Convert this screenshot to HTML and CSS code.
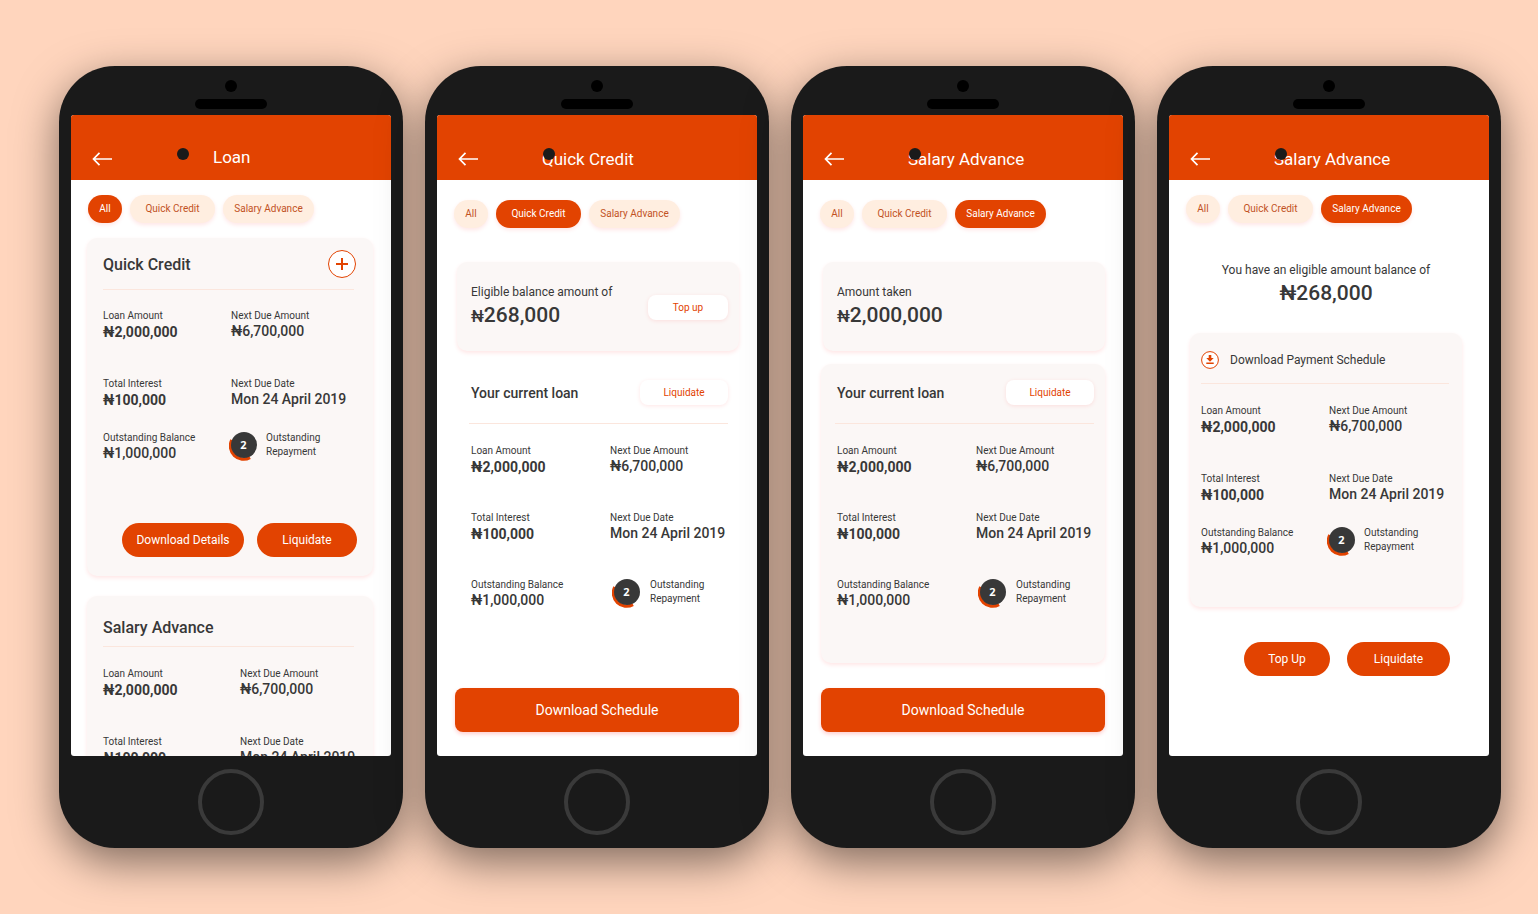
FILE: index.html
```
<!DOCTYPE html>
<html lang="en">
<head>
    <meta charset="UTF-8">
    <meta name="viewport" content="width=device-width, initial-scale=1.0">
    <title>Loan screens</title>
    <link rel="stylesheet" href="styles.css">
</head>
<body>
<svg class="sprite" aria-hidden="true">
    <symbol id="arrow" viewBox="0 0 20 16">
        <path d="M1.500 8H20M7.500 1.800L1.500 8l6 6.200" fill="none" stroke="#fff" stroke-width="1.700"/>
    </symbol>
    <symbol id="ring" viewBox="0 0 30 30">
        <path d="M2.800 9A13.200 13.200 0 0 0 21 26.500" fill="none" stroke="#e24301" stroke-width="3.200"/>
        <circle cx="15" cy="14" r="13" fill="#383838"/>
    </symbol>
</svg>

<main class="phones">
    <section class="phone">
        <div class="camera"></div>
        <div class="speaker"></div>
        <div class="screen">
            <header class="bar bar-center">
                <button class="back" aria-label="Back"><svg width="20" height="16"><use href="#arrow"/></svg></button>
                <h1>Loan</h1>
            </header>
            <span class="dot"></span>
            <nav class="tabs">
                <button class="tab tab-all active">All</button>
                <button class="tab">Quick Credit</button>
                <button class="tab tab-wide">Salary Advance</button>
            </nav>
            <div class="content list">
                <article class="card loan">
                    <div class="card-head">
                        <h2>Quick Credit</h2>
                        <button class="add" aria-label="Add">
                            <svg width="28" height="28" viewBox="0 0 28 28">
                                <circle cx="14" cy="14" r="13.5" fill="#fff" stroke="#e24301"/>
                                <path d="M14 8v12M8 14h12" stroke="#e24301" stroke-width="2"/>
                            </svg>
                        </button>
                    </div>
                    <div class="row">
                        <div><p>Loan Amount</p><b>₦2,000,000</b></div>
                        <div><p>Next Due Amount</p><strong>₦6,700,000</strong></div>
                    </div>
                    <div class="row tight">
                        <div><p>Total Interest</p><b>₦100,000</b></div>
                        <div><p>Next Due Date</p><strong>Mon 24 April 2019</strong></div>
                    </div>
                    <div class="row">
                        <div><p>Outstanding Balance</p><strong>₦1,000,000</strong></div>
                        <div class="repay">
                            <span class="badge"><svg width="30" height="30"><use href="#ring"/></svg><em>2</em></span>
                            <p>Outstanding<br>Repayment</p>
                        </div>
                    </div>
                    <div class="actions">
                        <button class="btn btn-details">Download Details</button>
                        <button class="btn">Liquidate</button>
                    </div>
                </article>
                <article class="card loan loan-wide">
                    <div class="card-head">
                        <h2>Salary Advance</h2>
                    </div>
                    <div class="row">
                        <div><p>Loan Amount</p><b>₦2,000,000</b></div>
                        <div><p>Next Due Amount</p><strong>₦6,700,000</strong></div>
                    </div>
                    <div class="row tight">
                        <div><p>Total Interest</p><b>₦100,000</b></div>
                        <div><p>Next Due Date</p><strong>Mon 24 April 2019</strong></div>
                    </div>
                </article>
            </div>
        </div>
        <button class="home" aria-label="Home"></button>
    </section>

    <section class="phone">
        <div class="camera"></div>
        <div class="speaker"></div>
        <div class="screen">
            <header class="bar">
                <button class="back" aria-label="Back"><svg width="20" height="16"><use href="#arrow"/></svg></button>
                <h1>Quick Credit</h1>
            </header>
            <span class="dot"></span>
            <nav class="tabs tabs-low">
                <button class="tab tab-all">All</button>
                <button class="tab active">Quick Credit</button>
                <button class="tab tab-wide">Salary Advance</button>
            </nav>
            <div class="content detail">
                <div class="card balance">
                    <div>
                        <p>Eligible balance amount of</p>
                        <div class="amount"><small>₦</small>268,000</div>
                    </div>
                    <button class="chip">Top up</button>
                </div>
                <article class="current">
                    <div class="current-head">
                        <h3>Your current loan</h3>
                        <button class="chip chip-wide">Liquidate</button>
                    </div>
                    <div class="row">
                        <div><p>Loan Amount</p><b>₦2,000,000</b></div>
                        <div><p>Next Due Amount</p><strong>₦6,700,000</strong></div>
                    </div>
                    <div class="row">
                        <div><p>Total Interest</p><b>₦100,000</b></div>
                        <div><p>Next Due Date</p><strong>Mon 24 April 2019</strong></div>
                    </div>
                    <div class="row">
                        <div><p>Outstanding Balance</p><strong>₦1,000,000</strong></div>
                        <div class="repay">
                            <span class="badge"><svg width="30" height="30"><use href="#ring"/></svg><em>2</em></span>
                            <p>Outstanding<br>Repayment</p>
                        </div>
                    </div>
                </article>
                <button class="download">Download Schedule</button>
            </div>
        </div>
        <button class="home" aria-label="Home"></button>
    </section>

    <section class="phone">
        <div class="camera"></div>
        <div class="speaker"></div>
        <div class="screen">
            <header class="bar">
                <button class="back" aria-label="Back"><svg width="20" height="16"><use href="#arrow"/></svg></button>
                <h1>Salary Advance</h1>
            </header>
            <span class="dot"></span>
            <nav class="tabs tabs-low">
                <button class="tab tab-all">All</button>
                <button class="tab">Quick Credit</button>
                <button class="tab tab-wide active">Salary Advance</button>
            </nav>
            <div class="content detail">
                <div class="card balance">
                    <div>
                        <p>Amount taken</p>
                        <div class="amount"><small>₦</small>2,000,000</div>
                    </div>
                </div>
                <article class="current card">
                    <div class="current-head">
                        <h3>Your current loan</h3>
                        <button class="chip chip-wide">Liquidate</button>
                    </div>
                    <div class="row">
                        <div><p>Loan Amount</p><b>₦2,000,000</b></div>
                        <div><p>Next Due Amount</p><strong>₦6,700,000</strong></div>
                    </div>
                    <div class="row">
                        <div><p>Total Interest</p><b>₦100,000</b></div>
                        <div><p>Next Due Date</p><strong>Mon 24 April 2019</strong></div>
                    </div>
                    <div class="row">
                        <div><p>Outstanding Balance</p><strong>₦1,000,000</strong></div>
                        <div class="repay">
                            <span class="badge"><svg width="30" height="30"><use href="#ring"/></svg><em>2</em></span>
                            <p>Outstanding<br>Repayment</p>
                        </div>
                    </div>
                </article>
                <button class="download">Download Schedule</button>
            </div>
        </div>
        <button class="home" aria-label="Home"></button>
    </section>

    <section class="phone">
        <div class="camera"></div>
        <div class="speaker"></div>
        <div class="screen">
            <header class="bar">
                <button class="back" aria-label="Back"><svg width="20" height="16"><use href="#arrow"/></svg></button>
                <h1>Salary Advance</h1>
            </header>
            <span class="dot"></span>
            <nav class="tabs">
                <button class="tab tab-all">All</button>
                <button class="tab">Quick Credit</button>
                <button class="tab tab-wide active">Salary Advance</button>
            </nav>
            <div class="content schedule">
                <div class="eligible">
                    <p>You have an eligible amount balance of</p>
                    <div class="amount">₦268,000</div>
                </div>
                <article class="card loan">
                    <a class="get" href="#">
                        <svg width="18" height="18" viewBox="0 0 18 18">
                            <circle cx="9" cy="9" r="8.4" fill="#fff" stroke="#e24301"/>
                            <path d="M7.7 4h2.6v3h2.4L9 10.8 5.3 7h2.4zM5.300 11.600h7.400v1.300H5.300z" fill="#e24301"/>
                        </svg>
                        Download Payment Schedule
                    </a>
                    <div class="row">
                        <div><p>Loan Amount</p><b>₦2,000,000</b></div>
                        <div><p>Next Due Amount</p><strong>₦6,700,000</strong></div>
                    </div>
                    <div class="row tight">
                        <div><p>Total Interest</p><b>₦100,000</b></div>
                        <div><p>Next Due Date</p><strong>Mon 24 April 2019</strong></div>
                    </div>
                    <div class="row">
                        <div><p>Outstanding Balance</p><strong>₦1,000,000</strong></div>
                        <div class="repay">
                            <span class="badge"><svg width="30" height="30"><use href="#ring"/></svg><em>2</em></span>
                            <p>Outstanding<br>Repayment</p>
                        </div>
                    </div>
                </article>
                <div class="actions">
                    <button class="btn btn-top">Top Up</button>
                    <button class="btn btn-pay">Liquidate</button>
                </div>
            </div>
        </div>
        <button class="home" aria-label="Home"></button>
    </section>
</main>
</body>
</html>
```
FILE: styles.css
```
* {
    box-sizing: border-box;
}

body {
    margin: 0;
    background: #ffd5bd;
    color: #383838;
    font-family: Roboto, "Liberation Sans", sans-serif;
    font-size: 10px;
    line-height: 14px;
}

h1, h2, h3, p {
    margin: 0;
}

h2, h3 {
    font-weight: 500;
}

button {
    border: none;
    padding: 0;
    background: none;
    color: inherit;
    font-family: inherit;
    font-size: inherit;
    line-height: inherit;
    cursor: pointer;
}

svg {
    display: block;
}

.sprite {
    display: none;
}

.phones {
    display: flex;
    flex-wrap: wrap;
    justify-content: center;
    align-content: center;
    row-gap: 66px;
    min-height: 100vh;
    padding: 66px 0;
}

/* device */

.phone {
    flex: none;
    position: relative;
    display: flex;
    flex-direction: column;
    align-items: center;
    margin-left: 22px;
    padding: 14px 12px 13px;
    border-radius: 56px;
    background: #1a1a1a;
    box-shadow: 0 14px 44px rgba(0, 0, 0, .5);
}

.camera {
    width: 12px;
    height: 12px;
    border-radius: 50%;
    background: #000;
}

.speaker {
    width: 72px;
    height: 10px;
    margin: 7px 0 6px;
    border-radius: 5px;
    background: #000;
}

.screen {
    position: relative;
    width: 320px;
    height: 641px;
    border-radius: 3px;
    overflow: hidden;
    background: #fff;
}

.home {
    width: 66px;
    height: 66px;
    margin-top: 13px;
    border: 4px solid #3a3a3a;
    border-radius: 50%;
}

.dot {
    position: absolute;
    top: 33px;
    left: 106px;
    width: 12px;
    height: 12px;
    border-radius: 50%;
    background: #1a1a1a;
}

/* top bar and tabs */

.bar {
    display: flex;
    align-items: flex-end;
    gap: 64px;
    height: 65px;
    padding: 0 21px 10px;
    background: #e24301;
    color: #fff;
}

.back {
    padding-bottom: 3px;
}

.bar h1 {
    font-size: 17px;
    font-weight: 400;
    line-height: 22px;
}

.bar-center h1 {
    margin: 0 0 2px 37px;
}

.tabs {
    display: flex;
    gap: 8px;
    padding: 15px 17px 0;
}

.tabs-low {
    padding-top: 20px;
}

.tab {
    width: 85px;
    height: 28px;
    border-radius: 14px;
    background: #ffeee0;
    color: #c2521f;
    box-shadow: 0 2px 4px rgba(255, 0, 0, .1);
}

.tab-all {
    width: 34px;
}

.tab-wide {
    width: 91px;
}

.tab.active {
    background: #e24301;
    color: #fff;
}

/* cards */

.card {
    border-radius: 10px;
    background: #fbf7f6;
    box-shadow: 0 2px 4px rgba(255, 0, 0, .1);
}

.row {
    display: grid;
    grid-template-columns: 128px 1fr;
    height: 32px;
    margin-bottom: 36px;
}

.row.tight {
    margin-bottom: 22px;
}

.row b, .row strong {
    display: block;
    font-size: 14px;
    line-height: 16px;
    font-weight: 500;
    white-space: nowrap;
}

.row b {
    margin-top: 1px;
    font-weight: 700;
}

.repay {
    display: flex;
    gap: 7px;
    margin-left: -2px;
}

.badge {
    position: relative;
}

.badge em {
    position: absolute;
    top: 0;
    left: 0;
    width: 29px;
    color: #fff;
    font: 700 11px/28px "Open Sans", sans-serif;
    text-align: center;
}

.actions {
    display: flex;
    justify-content: flex-end;
    gap: 13px;
}

.btn {
    width: 100px;
    height: 34px;
    border-radius: 17px;
    background: #e24301;
    color: #fff;
    font-size: 12px;
}

.btn-details {
    width: 122px;
}

.btn-top {
    width: 86px;
}

.btn-pay {
    width: 103px;
}

.list {
    padding: 15px 18px 0 16px;
}

.list .loan {
    height: 338px;
    margin-bottom: 20px;
    padding: 12px 16px;
}

.card-head {
    display: flex;
    justify-content: space-between;
    align-items: center;
    height: 40px;
    margin: 0 3px 19px 0;
    padding-bottom: 12px;
    border-bottom: 1px solid #fbe6dd;
}

.card-head h2 {
    padding-top: 2px;
    font-size: 16px;
    line-height: 26px;
}

.add {
    margin-right: -2px;
}

.list .actions {
    margin-top: 60px;
}

.list .loan-wide {
    padding-top: 17px;
}

.loan-wide .card-head {
    height: 34px;
    margin-bottom: 20px;
    padding-bottom: 6px;
}

.loan-wide .row {
    grid-template-columns: 137px 1fr;
}

/* single loan */

.detail {
    padding: 34px 18px 0;
}

.balance {
    display: flex;
    justify-content: space-between;
    align-items: center;
    height: 89px;
    margin: 0 0 13px 2px;
    padding: 2px 11px 0 14px;
}

.balance p {
    font-size: 12px;
    line-height: 16px;
}

.amount {
    font-size: 21px;
    font-weight: 500;
    line-height: 30px;
}

.amount small {
    font-size: 16px;
}

.chip {
    width: 80px;
    height: 25px;
    border-radius: 8px;
    background: #fff;
    color: #e24301;
    box-shadow: 0 1px 4px rgba(255, 0, 0, .1);
}

.chip-wide {
    width: 88px;
}

.current {
    height: 299px;
    margin-bottom: 25px;
    padding: 16px 11px 0 16px;
}

.current-head {
    display: flex;
    justify-content: space-between;
    align-items: flex-start;
    height: 44px;
    margin: 0 0 20px -2px;
    padding-left: 2px;
    border-bottom: 1px solid #fbe6dd;
}

.current h3 {
    font-size: 14px;
    line-height: 26px;
}

.current .row {
    grid-template-columns: 139px 1fr;
    margin-bottom: 35px;
}

.current .repay {
    gap: 8px;
    margin-left: 2px;
}

.download {
    width: 100%;
    height: 44px;
    border-radius: 8px;
    background: #e24301;
    color: #fff;
    font-size: 14px;
    box-shadow: 0 2px 4px rgba(255, 0, 0, .2);
}

/* payment schedule */

.schedule {
    padding: 39px 27px 0 21px;
}

.eligible {
    margin-bottom: 25px;
    text-align: center;
}

.eligible p {
    font-size: 12px;
    line-height: 16px;
}

.schedule .loan {
    height: 274px;
    margin-bottom: 35px;
    padding: 10px 13px 0 11px;
}

.get {
    display: flex;
    align-items: center;
    gap: 11px;
    height: 41px;
    margin-bottom: 20px;
    padding-bottom: 6px;
    border-bottom: 1px solid #fbe6dd;
    color: inherit;
    font-size: 12px;
    text-decoration: none;
}

.schedule .actions {
    gap: 17px;
    margin-right: 12px;
}
```
